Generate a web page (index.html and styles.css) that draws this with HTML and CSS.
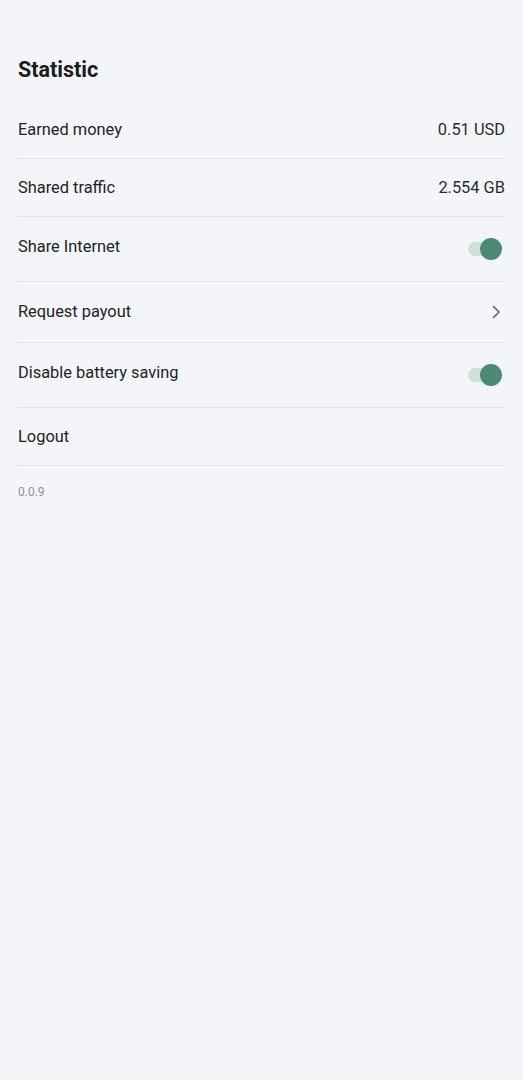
FILE: index.html
```html
<!DOCTYPE html>
<html>
<head>
<meta charset="utf-8">
<link rel="stylesheet" href="styles.css">
</head>
<body>
<main class="screen">
  <h1 class="title">Statistic</h1>
  <ul class="list">
    <li class="row row-text"><span class="label">Earned money</span><span class="value">0.51 USD</span></li>
    <li class="row row-text"><span class="label">Shared traffic</span><span class="value">2.554 GB</span></li>
    <li class="row row-toggle"><span class="label">Share Internet</span><span class="toggle"><span class="track"></span><span class="thumb"></span></span></li>
    <li class="row row-link"><span class="label">Request payout</span>
      <svg class="chevron" width="10" height="16" viewBox="0 0 10 16"><path d="M2.5 2.5 L8 8 L2.5 13.5" fill="none" stroke="#5f6063" stroke-width="1.6" stroke-linecap="round" stroke-linejoin="round"/></svg>
    </li>
    <li class="row row-toggle"><span class="label">Disable battery saving</span><span class="toggle"><span class="track"></span><span class="thumb"></span></span></li>
    <li class="row row-text"><span class="label">Logout</span></li>
  </ul>
  <p class="version">0.0.9</p>
</main>
</body>
</html>
```
FILE: styles.css
```css
html, body {
  margin: 0;
  padding: 0;
  background: #f4f5f9;
}
body {
  font-family: Roboto, "Noto Sans", "Liberation Sans", sans-serif;
  color: #222326;
  height: 1080px;
}
.screen {
  padding: 56px 18px 0 17px;
}
.title {
  margin: 0 0 0 1px;
  font-size: 21.5px;
  font-weight: 700;
  line-height: 28px;
  color: #1b1c1f;
}
.list {
  list-style: none;
  margin: 17px 0 0 0;
  padding: 0;
}
.row {
  display: flex;
  align-items: center;
  justify-content: space-between;
  border-bottom: 1px solid #e1e3e7;
  font-size: 16.4px;
  padding-left: 1px;
}
.row-text { height: 57px; }
.row-toggle { height: 64px; }
.row-link { height: 60px; }
.label {
  line-height: 20px;
}
.row-toggle .label { margin-top: -4px; }
.value {
  color: #2a2b2e;
  line-height: 20px;
}
.toggle {
  position: relative;
  width: 36px;
  height: 22px;
  margin-right: 3px;
  flex: none;
}
.track {
  position: absolute;
  left: 2px;
  top: 4px;
  width: 30px;
  height: 14px;
  border-radius: 7px;
  background: #cfe1da;
}
.thumb {
  position: absolute;
  right: 0;
  top: 0;
  width: 22px;
  height: 22px;
  border-radius: 50%;
  background: #4c8a75;
}
.chevron {
  margin-right: 4px;
}
.version {
  margin: 18px 0 0 1px;
  font-size: 12px;
  line-height: 16px;
  color: #8e9095;
}
```
